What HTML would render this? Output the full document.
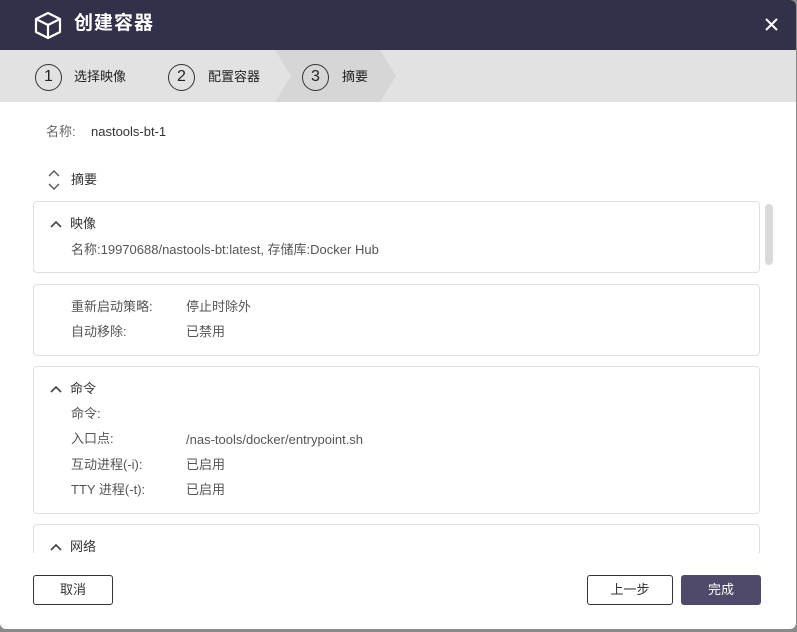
<!DOCTYPE html>
<html><head><meta charset="utf-8"><style>
*{box-sizing:border-box;margin:0;padding:0}
body{width:797px;height:632px;background:#8a8a8a;font-family:"Liberation Sans","Noto Sans CJK SC",sans-serif;position:relative;overflow:hidden}
.dlg{position:absolute;left:0;top:0;width:796px;height:629px;background:#fff;border-radius:0 6px 6px 6px;overflow:hidden}
.hd{position:absolute;left:0;top:0;width:100%;height:50px;background:#33304a;color:#fff}
.hd .t{position:absolute;left:74px;top:11px;font-size:19px;line-height:26px;font-weight:bold;letter-spacing:1px}
.steps{position:absolute;left:0;top:50px;width:100%;height:52px;background:#e2e2e2}
.st{position:absolute;top:14px;font-size:13px;color:#222}
.st .c{position:absolute;top:0;width:27px;height:27px;border:1.5px solid #333;border-radius:50%;text-align:center;line-height:24px;font-size:16px}
.st span.l{position:absolute;top:4px;line-height:18px;white-space:nowrap}
.card{position:absolute;left:33px;width:727px;border:1px solid #e0e0e0;border-radius:4px;background:#fff}
.tx{position:absolute;font-size:13px;line-height:16px;color:#555;white-space:nowrap}
.btn{position:absolute;top:575px;height:30px;border:1px solid #333;border-radius:3px;font-size:13px;text-align:center;line-height:28px;color:#333;background:#fff}
</style></head><body>
<div class="dlg">
<div class="hd">
<svg style="position:absolute;left:34px;top:11px" width="28" height="29" viewBox="0 0 28 29" fill="none" stroke="#fff" stroke-width="2.2" stroke-linejoin="round"><path d="M14 2L26 8V21L14 27L2 21V8Z"/><path d="M2 8L14 14L26 8M14 14V27"/></svg>
<div class="t">创建容器</div>
<svg style="position:absolute;left:765px;top:18px" width="13" height="13" viewBox="0 0 13 13" stroke="#fff" stroke-width="2"><path d="M1 1L12 12M12 1L1 12"/></svg>
</div>
<div class="steps">
<svg style="position:absolute;left:0;top:0" width="797" height="52"><polygon points="275,0 380,0 396,26 380,52 275,52 291,26" fill="#d6d6d6"/></svg>
<div class="st" style="left:35px"><div class="c">1</div><span class="l" style="left:39px">选择映像</span></div>
<div class="st" style="left:168px"><div class="c">2</div><span class="l" style="left:40px">配置容器</span></div>
<div class="st" style="left:302px"><div class="c">3</div><span class="l" style="left:40px">摘要</span></div>
</div>
<div class="tx" style="left:46px;top:124px;color:#666">名称:</div>
<div class="tx" style="left:91px;top:124px;color:#333">nastools-bt-1</div>
<svg style="position:absolute;left:48px;top:170px" width="12" height="20" viewBox="0 0 12 20" fill="none" stroke="#555" stroke-width="1.4"><path d="M1 6L6 1L11 6M1 14L6 19L11 14"/></svg>
<div class="tx" style="left:71px;top:172px;color:#333">摘要</div>
<div style="position:absolute;left:0;top:195px;width:797px;height:358px;overflow:hidden">
<div class="card" style="top:6px;height:72px"></div>
<div class="card" style="top:89px;height:72px"></div>
<div class="card" style="top:171px;height:148px"></div>
<div class="card" style="top:329px;height:80px"></div>
<svg style="position:absolute;left:50px;top:25px" width="12" height="8" fill="none" stroke="#444" stroke-width="1.6"><path d="M1 7L6 2L11 7"/></svg>
<div class="tx" style="left:70px;top:21px;color:#333">映像</div>
<div class="tx" style="left:71px;top:47px">名称:19970688/nastools-bt:latest, 存储库:Docker Hub</div>
<div class="tx" style="left:71px;top:104px">重新启动策略:</div><div class="tx" style="left:186px;top:104px">停止时除外</div>
<div class="tx" style="left:71px;top:129px">自动移除:</div><div class="tx" style="left:186px;top:129px">已禁用</div>
<svg style="position:absolute;left:50px;top:190px" width="12" height="8" fill="none" stroke="#444" stroke-width="1.6"><path d="M1 7L6 2L11 7"/></svg>
<div class="tx" style="left:70px;top:186px;color:#333">命令</div>
<div class="tx" style="left:71px;top:211px">命令:</div>
<div class="tx" style="left:71px;top:236px">入口点:</div><div class="tx" style="left:186px;top:237px">/nas-tools/docker/entrypoint.sh</div>
<div class="tx" style="left:71px;top:262px">互动进程(-i):</div><div class="tx" style="left:186px;top:262px">已启用</div>
<div class="tx" style="left:71px;top:287px">TTY 进程(-t):</div><div class="tx" style="left:186px;top:287px">已启用</div>
<svg style="position:absolute;left:50px;top:348px" width="12" height="8" fill="none" stroke="#444" stroke-width="1.6"><path d="M1 7L6 2L11 7"/></svg>
<div class="tx" style="left:70px;top:344px;color:#333">网络</div>
<div style="position:absolute;left:765px;top:9px;width:8px;height:61px;background:#dadada;border-radius:4px"></div>
</div>
<div class="btn" style="left:33px;width:80px">取消</div>
<div class="btn" style="left:587px;width:86px">上一步</div>
<div class="btn" style="left:681px;width:80px;background:#504a6a;border-color:#504a6a;color:#fff">完成</div>
</div>
</body></html>
